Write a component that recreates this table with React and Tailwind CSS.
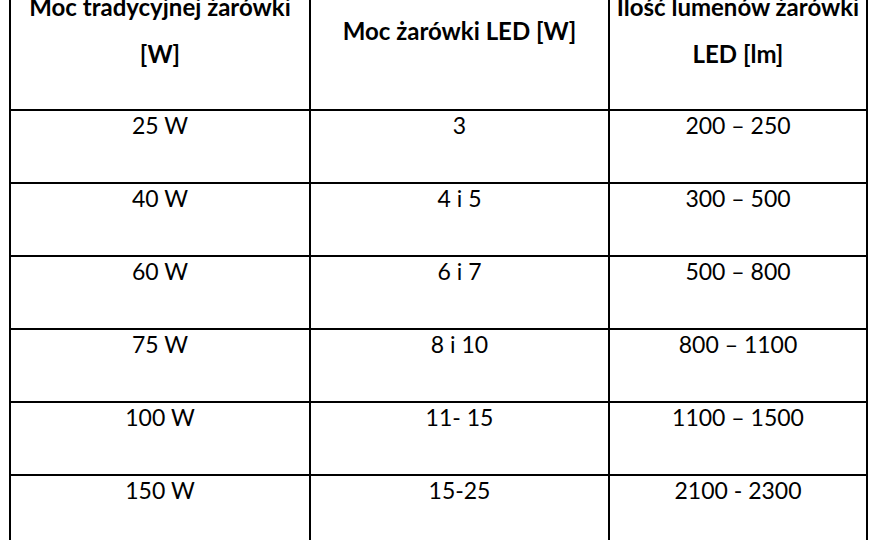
export default function App() {
  const rows = [
    ["25 W", "3", "200 – 250"],
    ["40 W", "4 i 5", "300 – 500"],
    ["60 W", "6 i 7", "500 – 800"],
    ["75 W", "8 i 10", "800 – 1100"],
    ["100 W", "11- 15", "1100 – 1500"],
    ["150 W", "15-25", "2100 - 2300"],
  ];
  return (
    <div
      className="w-[880px] h-[540px] overflow-hidden bg-white text-black"
      style={{ fontFamily: "Lato, 'Noto Sans', sans-serif" }}
    >
      <div className="ml-[9px] -mt-[23px] w-[859px] bg-black p-[2px] grid grid-cols-[298px_297px_256px] gap-[2px]">
        <div className="bg-white h-[130px] flex flex-col justify-center items-center pb-[28px] font-bold text-[24px] leading-[47px] text-center whitespace-nowrap">
          <div>Moc tradycyjnej żarówki</div>
          <div>[W]</div>
        </div>
        <div className="bg-white h-[130px] flex flex-col justify-center items-center pb-[28px] font-bold text-[24px] leading-[47px] text-center whitespace-nowrap">
          <div>Moc żarówki LED [W]</div>
        </div>
        <div className="bg-white h-[130px] flex flex-col justify-center items-center pb-[28px] font-bold text-[24px] leading-[47px] text-center whitespace-nowrap">
          <div>Ilość lumenów żarówki</div>
          <div>LED [lm]</div>
        </div>
        {rows.map((r, i) =>
          r.map((c, j) => (
            <div
              key={i + "-" + j}
              className="bg-white h-[71px] text-center text-[23px] leading-[28px] whitespace-nowrap"
            >
              {c}
            </div>
          ))
        )}
      </div>
    </div>
  );
}
